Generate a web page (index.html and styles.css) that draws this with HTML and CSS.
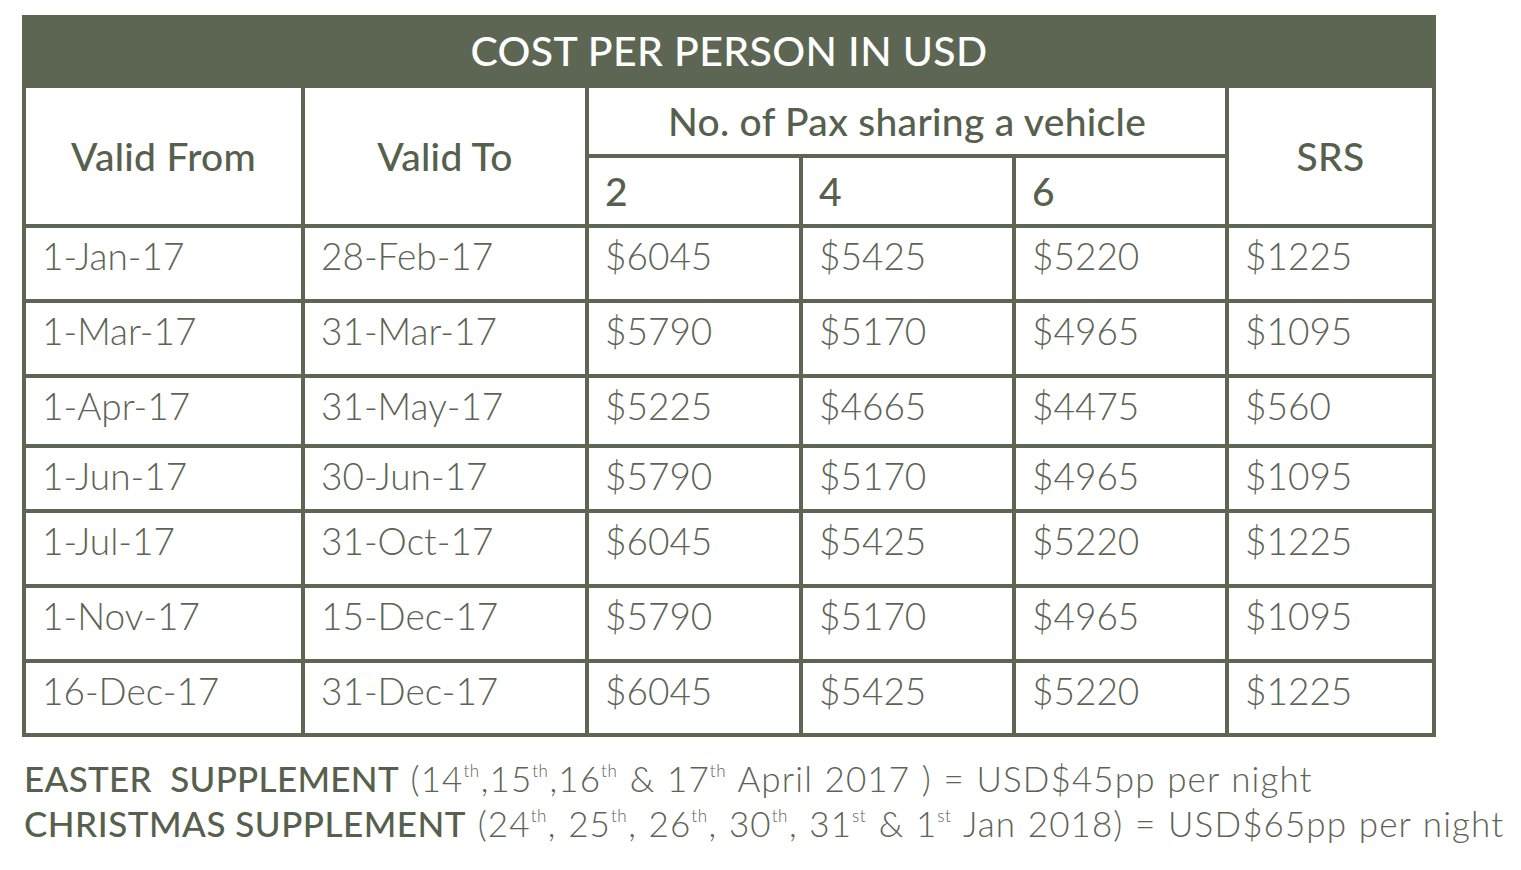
FILE: index.html
```html
<!DOCTYPE html>
<html lang="en">
<head>
<meta charset="utf-8">
<title>Cost per person in USD</title>
<link rel="stylesheet" href="styles.css">
</head>
<body>
<div class="sheet">
  <table class="rates">
    <caption class="title">COST PER PERSON IN USD</caption>
    <colgroup>
      <col class="c-from">
      <col class="c-to">
      <col class="c-pax">
      <col class="c-pax4">
      <col class="c-pax6">
      <col class="c-srs">
    </colgroup>
    <thead>
      <tr class="hrow">
        <th rowspan="2" class="hcenter">Valid From</th>
        <th rowspan="2" class="hcenter">Valid To</th>
        <th colspan="3" class="hcenter">No. of Pax sharing a vehicle</th>
        <th rowspan="2" class="hcenter">SRS</th>
      </tr>
      <tr class="hrow">
        <th class="hleft">2</th>
        <th class="hleft">4</th>
        <th class="hleft">6</th>
      </tr>
    </thead>
    <tbody>
      <tr class="r71"><td>1-Jan-17</td><td>28-Feb-17</td><td>$6045</td><td>$5425</td><td>$5220</td><td>$1225</td></tr>
      <tr class="r71"><td>1-Mar-17</td><td>31-Mar-17</td><td>$5790</td><td>$5170</td><td>$4965</td><td>$1095</td></tr>
      <tr class="r66"><td>1-Apr-17</td><td>31-May-17</td><td>$5225</td><td>$4665</td><td>$4475</td><td>$560</td></tr>
      <tr class="r61"><td>1-Jun-17</td><td>30-Jun-17</td><td>$5790</td><td>$5170</td><td>$4965</td><td>$1095</td></tr>
      <tr class="r71"><td>1-Jul-17</td><td>31-Oct-17</td><td>$6045</td><td>$5425</td><td>$5220</td><td>$1225</td></tr>
      <tr class="r71"><td>1-Nov-17</td><td>15-Dec-17</td><td>$5790</td><td>$5170</td><td>$4965</td><td>$1095</td></tr>
      <tr class="r70"><td>16-Dec-17</td><td>31-Dec-17</td><td>$6045</td><td>$5425</td><td>$5220</td><td>$1225</td></tr>
    </tbody>
  </table>
  <div class="notes">
    <p class="note note-easter"><span class="label">EASTER&nbsp; SUPPLEMENT</span> (14<sup>th</sup>,15<sup>th</sup>,16<sup>th</sup> &amp; 17<sup>th</sup> April 2017 ) = USD$45pp per night</p>
    <p class="note note-xmas"><span class="label">CHRISTMAS SUPPLEMENT</span> (24<sup>th</sup>, 25<sup>th</sup>, 26<sup>th</sup>, 30<sup>th</sup>, 31<sup>st</sup> &amp; 1<sup>st</sup> Jan 2018) = USD$65pp per night</p>
  </div>
</div>
</body>
</html>
```
FILE: styles.css
```css
html, body {
  margin: 0;
  padding: 0;
  background: #ffffff;
}

body {
  font-family: Lato, "Liberation Sans", sans-serif;
  color: #5d6455;
}

.sheet {
  padding: 15px 0 0 22px;
}

.rates {
  width: 1414px;
  table-layout: fixed;
  border-collapse: separate;
  border-spacing: 4px;
  background: #5c6652;
}

.title {
  background: #5c6652;
  color: #ffffff;
  height: 69px;
  line-height: 72px;
  font-size: 41px;
  font-weight: 500;
  text-align: center;
  letter-spacing: 0.4px;
}

.c-from { width: 275px; }
.c-to { width: 280px; }
.c-pax { width: 210px; }
.c-pax4 { width: 209px; }
.c-pax6 { width: 209px; }
.c-srs { width: 203px; }

.rates th,
.rates td {
  background: #ffffff;
  padding: 0 0 0 16px;
}

.rates th {
  font-weight: 500;
  font-size: 39px;
  letter-spacing: 0.3px;
  color: #56604d;
  vertical-align: middle;
}

.hrow { height: 66px; }

.hcenter {
  text-align: center;
  padding: 0 !important;
}

.hleft {
  text-align: left;
}

.rates td {
  font-weight: 300;
  font-size: 37px;
  line-height: 44px;
  vertical-align: top;
  padding-top: 6px;
  white-space: nowrap;
}

.r71 { height: 71px; }
.r66 { height: 66px; }
.r61 { height: 61px; }
.r70 { height: 70px; }

.notes {
  margin-top: 19px;
  padding-left: 2px;
}

.note {
  margin: 0;
  font-size: 35px;
  line-height: 45px;
  font-weight: 300;
  letter-spacing: 1.1px;
  word-spacing: 1px;
  white-space: nowrap;
}

.label {
  font-weight: 500;
  letter-spacing: 0.5px;
  word-spacing: 0;
  color: #56604d;
}

.note-easter .label {
  letter-spacing: 0.3px;
}

.note sup {
  font-size: 17px;
  line-height: 0;
  letter-spacing: 0.5px;
  padding-right: 1px;
  vertical-align: 15px;
}
```
